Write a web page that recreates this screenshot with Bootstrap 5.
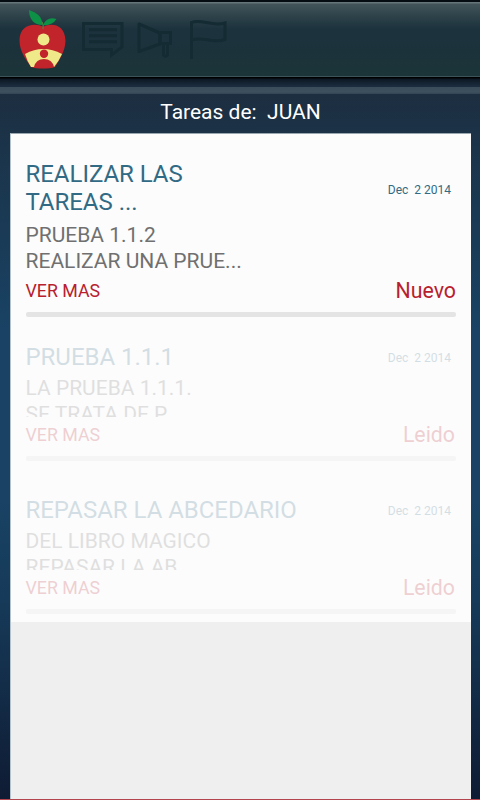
<!DOCTYPE html>
<html lang="es">
<head>
<meta charset="utf-8">
<meta name="viewport" content="width=device-width, initial-scale=1">
<title>Tareas</title>
<link href="https://cdn.jsdelivr.net/npm/bootstrap@5.3.0/dist/css/bootstrap.min.css" rel="stylesheet">
<style>
body{height:800px;font-family:Roboto,"Liberation Sans",sans-serif;background:linear-gradient(#1d2e40 0,#1d2e40 95px,#1b344a 150px,#194264 330px,#194264 500px,#163a59 600px,#0f1b33 800px)}
.app-bar{height:77px;padding:0 0 0 18px;border-top:2px solid #050d13;border-bottom:1px solid #3b5359;background:linear-gradient(#66757a 0,#66757a 1px,#42545a 2px,#2c4148 15px,#1c323d 27px,#1c323b 50px,#1b3538 100%)}
.bar-shadow{height:10px;background:linear-gradient(#000 0,#000 1px,#0c1722 2px,#1c2c3f 9px)}
.stripe{height:7px;background:linear-gradient(#3a4c5a,#3e505d 70%,#334555)}
.heading{height:39px;font-size:21px;line-height:36px;color:#fff;white-space:pre;font-weight:400;padding-left:1px}
.panel{margin:0 9px 0 10px;background:#efefef;border-left:1px solid #b4c3cb;border-top:1px solid #9aa7b0}
.base-line{height:1px;background:#b3454f}
.tasks{height:488px;background:#fcfcfc;padding:0 15px 0 14.5px}
.task{padding-top:26px}
.task-title{font-size:24px;line-height:28px;color:#316a84;width:275px;white-space:nowrap;letter-spacing:-.03px}
.task-date{font-size:12px;line-height:14px;color:#316a84;white-space:pre;padding:2px 5px 0 0}
.task:first-child .task-date{padding-top:4px}
.task-text{font-size:21px;line-height:26px;color:#707070;height:52px;margin-top:6px;white-space:nowrap}
.task-more{font-size:17.8px;line-height:21px;color:#b8202e}
.task-state{font-size:21.3px;line-height:21px;color:#b8202e}
.task-foot{margin-top:6px}
.rule{height:5px;border-radius:2px;background:#e4e4e4;margin-top:11px}
.seen>*{opacity:.2}
.seen .task-text{height:42px;margin-top:4px}
.seen .task-foot{margin-top:7px}
.seen .task-state{padding-right:1px}
.seen .rule{opacity:.3}
.late{padding-top:35px}
</style>
<script src="https://cdn.jsdelivr.net/npm/bootstrap@5.3.0/dist/js/bootstrap.bundle.min.js"></script>
</head>
<body class="d-flex flex-column overflow-hidden m-0">
<header class="app-bar d-flex flex-shrink-0">
<svg width="215" height="73" viewBox="18 2 215 73" fill="none">
<path d="M43 27C37 23 20 23 19.500 40C19.500 51 25 58 31 67C37 69 49 69 55 67C60 59 65 51 65.500 41C65 23 50 23 43 27Z" fill="#c2242b"/>
<path d="M25 54Q43 44 62 54Q59 61 54 67L31 67Q27 61 25 54Z" fill="#f0e98a"/>
<path d="M34 67Q36 59 44 59T54 67Q44 69 34 67Z" fill="#c2242b"/>
<circle cx="43.500" cy="39.500" r="6" fill="#f0e98a"/><circle cx="44" cy="53.700" r="4.200" fill="#c2242b"/>
<path d="M43 29Q44 25 42 22" stroke="#6c7740" stroke-width="1.300"/>
<path d="M29 10C37 13 42 16 42.500 25C34 25 29 19 29 10Z" fill="#0d9146"/>
<path d="M43 25Q47 16 56.500 19Q52 26 43 25Z" fill="#0d9146"/>
<g stroke="#152b33" stroke-width="3" stroke-linejoin="miter">
<path d="M83.500 23.500H122V47L111.500 55V49.500H83.500Z"/>
<path d="M89 29.700H117M89 35.700H117M89 41.700H117"/>
<path d="M139 24L160 33V44L139 51.500Z" stroke-linejoin="round"/>
<path d="M160 32.500H170.500V43.500H160Z"/><path d="M163.500 44V55Q165.500 57.500 167.500 55V44"/>
<path d="M191.500 59V22.500C201 18 211 27 225 23V39.500C212 44 203 36 192 40"/>
</g>
</svg>
</header>
<div class="bar-shadow flex-shrink-0"></div>
<div class="stripe flex-shrink-0"></div>
<h1 class="heading text-center flex-shrink-0 m-0">Tareas de:  JUAN</h1>
<main class="panel flex-grow-1">
<div class="tasks">
<article class="task">
<div class="d-flex justify-content-between align-items-center"><div class="task-title">REALIZAR LAS<br>TAREAS ...</div><div class="task-date">Dec  2 2014</div></div>
<div class="task-text overflow-hidden">PRUEBA 1.1.2<br>REALIZAR UNA PRUE...</div>
<div class="task-foot d-flex justify-content-between"><span class="task-more">VER MAS</span><span class="task-state">Nuevo</span></div>
<div class="rule"></div>
</article>
<article class="task seen">
<div class="d-flex justify-content-between align-items-center"><div class="task-title">PRUEBA 1.1.1</div><div class="task-date">Dec  2 2014</div></div>
<div class="task-text overflow-hidden">LA PRUEBA 1.1.1.<br>SE TRATA DE P</div>
<div class="task-foot d-flex justify-content-between"><span class="task-more">VER MAS</span><span class="task-state">Leido</span></div>
<div class="rule"></div>
</article>
<article class="task seen late">
<div class="d-flex justify-content-between align-items-center"><div class="task-title">REPASAR LA ABCEDARIO</div><div class="task-date">Dec  2 2014</div></div>
<div class="task-text overflow-hidden">DEL LIBRO MAGICO<br>REPASAR LA AB</div>
<div class="task-foot d-flex justify-content-between"><span class="task-more">VER MAS</span><span class="task-state">Leido</span></div>
<div class="rule"></div>
</article>
</div>
</main>
<div class="base-line flex-shrink-0"></div>
</body>
</html>
